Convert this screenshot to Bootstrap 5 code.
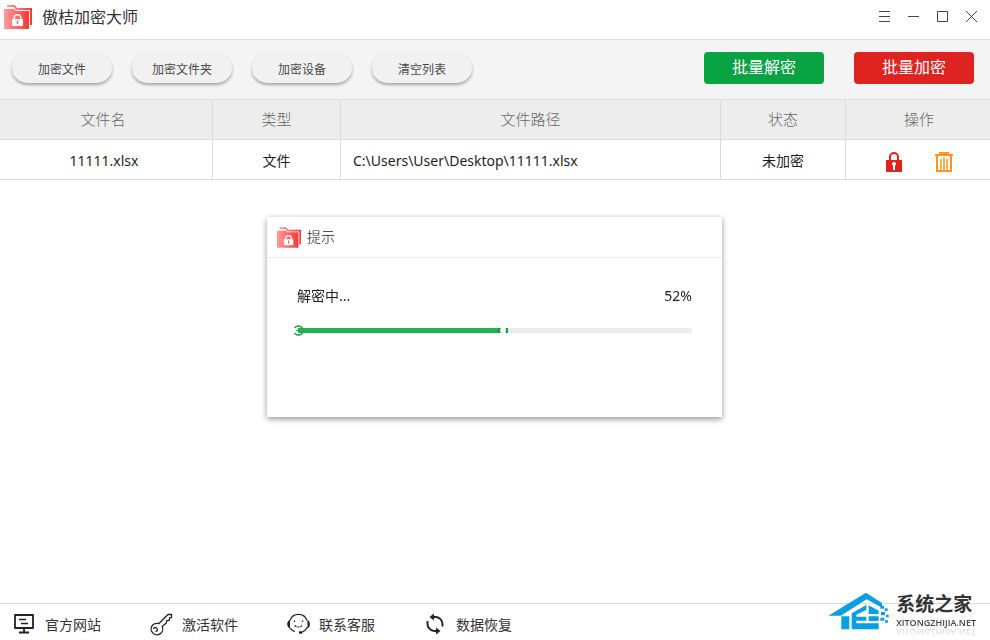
<!DOCTYPE html>
<html lang="zh-CN">
<head>
<meta charset="utf-8">
<meta name="viewport" content="width=device-width, initial-scale=1">
<title>傲桔加密大师</title>
<link href="https://cdn.jsdelivr.net/npm/bootstrap@5.3.0/dist/css/bootstrap.min.css" rel="stylesheet">
<style>
  body { font-family: "Noto Sans", "Noto Sans CJK SC", sans-serif; font-size: 14px; line-height: 20px; color: #1e1e1e; }
  svg { display: block; flex: none; }
  .title-bar { height: 40px; border-bottom: 1px solid #dcdcdc; padding: 0 12px 6px 4px; gap: 10px; }
  .title-bar h1 { font-size: 16px; line-height: 24px; color: #333; font-weight: 400; }
  .win-group { gap: 16px; }
  .win-btn { padding: 0; border: 0; background: none; color: #444; }
  .tool-bar { min-height: 60px; background: #f4f4f4; border-bottom: 1px solid #dcdcdc; padding: 0 16px 3px 12px; }
  .pill-group { gap: 20px; }
  .main-group { gap: 30px; }
  .btn-pill { width: 100px; height: 30px; padding: 3px 0 0; border: 0; border-radius: 15px; background: #f1f1f1; color: #4a4a4a; font-size: 12px; line-height: 20px; box-shadow: 0 2px 3px rgba(0,0,0,.32); }
  .btn-main { width: 120px; height: 32px; padding: 0 0 2px; border: 0; border-radius: 4px; color: #fff; font-size: 16px; line-height: 24px; }
  .btn-main:hover, .btn-main:active { color: #fff; }
  .btn-green, .btn-green:hover { background: #0aa344; }
  .btn-red, .btn-red:hover { background: #de2421; }
  .file-table { table-layout: fixed; width: 100%; border-collapse: separate; border-spacing: 0; }
  .file-table th, .file-table td { height: 40px; padding: 2px 0 0; text-align: center; border-bottom: 1px solid #dcdcdc; border-right: 1px solid #dcdcdc; white-space: nowrap; }
  .file-table th { background: #ededed; color: #666; font-size: 15px; font-weight: 300; padding: 0 0 2px; }
  .file-table th:last-child, .file-table td:last-child { border-right: 0; padding-left: 2px; }
  .file-table th:first-child { padding-right: 6px; }
  .file-table td:first-child { padding-right: 4px; }
  .file-table td.path-cell { text-align: left; padding-left: 12px; }
  .col-name { width: 213px; } .col-type { width: 128px; } .col-state { width: 125px; } .col-act { width: 144px; }
  .row-tools { gap: 32px; padding-top: 2px; }
  .overlay { position: fixed; inset: 0; padding: 0 1px 6px 0; pointer-events: none; }
  .tip-box { width: 455px; min-height: 200px; background: #fff; box-shadow: 0 2px 6px rgba(0,0,0,.42); pointer-events: auto; }
  .tip-head { height: 41px; padding: 0 10px; gap: 6px; border-bottom: 1px solid #ebebeb; }
  .tip-head h2 { font-size: 14px; line-height: 20px; font-weight: 300; color: #111; }
  .tip-body { padding: 28px 30px; }
  .track { position: relative; margin-top: 22px; }
  .track .progress { height: 5px; border-radius: 0; background: #ededed; }
  .track .progress-bar { background: #22b14c; }
  .knob { position: absolute; top: -3px; margin-left: -4px; }
  .foot-bar { position: relative; min-height: 37px; border-top: 1px solid #dcdcdc; padding: 6px 12px 0; }
  .foot-link { width: 137px; gap: 9px; color: #333; text-decoration: none; height: 28px; }
  .foot-link svg { color: #222; }
  .foot-link span { padding-top: 1px; }
  .site-mark { position: absolute; right: 14px; bottom: 10px; gap: 6px; color: #333; text-decoration: none; }
  .site-name { font-size: 19px; line-height: 25px; font-weight: 700; }
  .site-url { font-family: "Open Sans", sans-serif; font-size: 9px; line-height: 12px; font-weight: 600; color: #444; -webkit-box-reflect: below -3px linear-gradient(transparent, rgba(0,0,0,.3)); }
</style>
</head>
<body class="d-flex flex-column min-vh-100 bg-white">
<svg width="0" height="0" class="position-absolute" aria-hidden="true">
  <defs>
    <linearGradient id="redFade"><stop offset="0" stop-color="#ff9c9c"/><stop offset="1" stop-color="#fd3636"/></linearGradient>
    <symbol id="folder" viewBox="0 0 28 24">
      <path fill="url(#redFade)" d="M3 2V0h8l2 3h15v17h-2V5H12L10 2z"/>
      <path fill="url(#redFade)" d="M0 4h10l2 2h13v18H0z"/>
      <path fill="#fff" d="M8 14h1.500v-1a4 4 0 0 1 8 0v1H19v7H8zM11 14h5v-1a2.500 2.500 0 0 0-5 0z" fill-rule="evenodd"/>
      <path d="M13.500 15.500v3.500" stroke="#fd6060" stroke-width="1.400"/>
    </symbol>
  </defs>
</svg>

<header class="title-bar d-flex align-items-center">
  <svg width="28" height="24" aria-hidden="true"><use href="#folder"/></svg>
  <h1 class="mb-0 me-auto">傲桔加密大师</h1>
  <div class="win-group d-flex">
    <button class="win-btn" aria-label="菜单"><svg width="13" height="13" stroke="currentColor"><path d="M1 1.500h11M1 6.500h11M1 11.500h11"/></svg></button>
    <button class="win-btn" aria-label="最小化"><svg width="13" height="13" stroke="currentColor"><path d="M1 6.500h11"/></svg></button>
    <button class="win-btn" aria-label="最大化"><svg width="13" height="13" stroke="currentColor" fill="none"><path d="M1.500 1.500h10v10h-10z"/></svg></button>
    <button class="win-btn" aria-label="关闭"><svg width="13" height="13" stroke="currentColor"><path d="M1 1l11 11M12 1L1 12"/></svg></button>
  </div>
</header>

<div class="tool-bar d-flex align-items-center">
  <div class="pill-group d-flex me-auto">
    <button class="btn btn-pill">加密文件</button>
    <button class="btn btn-pill">加密文件夹</button>
    <button class="btn btn-pill">加密设备</button>
    <button class="btn btn-pill">清空列表</button>
  </div>
  <div class="main-group d-flex">
    <button class="btn btn-main btn-green">批量解密</button>
    <button class="btn btn-main btn-red">批量加密</button>
  </div>
</div>

<main class="flex-grow-1">
  <table class="file-table">
    <colgroup><col class="col-name"><col class="col-type"><col><col class="col-state"><col class="col-act"></colgroup>
    <thead><tr><th>文件名</th><th>类型</th><th>文件路径</th><th>状态</th><th>操作</th></tr></thead>
    <tbody>
      <tr>
        <td>11111.xlsx</td><td>文件</td><td class="path-cell">C:\Users\User\Desktop\11111.xlsx</td><td>未加密</td>
        <td>
          <div class="row-tools d-flex justify-content-center align-items-center">
            <button class="win-btn" aria-label="加密"><svg width="18" height="20" viewBox="0 0 18 20"><path fill="#de2421" fill-rule="evenodd" d="M1 8h3V5a5 5 0 0 1 10 0v3h3v12H1zM6 8h6V5a3 3 0 0 0-6 0zM7 12a2 2 0 0 0 1 1.700V18h2v-4.300A2 2 0 1 0 7 12z"/></svg></button>
            <button class="win-btn" aria-label="删除"><svg width="18" height="20" viewBox="0 0 18 20" fill="none" stroke="#ff9420"><path stroke-width="2" d="M0 3h18M2 3v16h14V3M5 3V1h8v2"/><path stroke-width="1.500" d="M6 7v11M9 5v13M12 7v11"/></svg></button>
          </div>
        </td>
      </tr>
    </tbody>
  </table>
</main>

<footer class="foot-bar d-flex align-items-start">
  <a href="#" class="foot-link d-flex align-items-center">
    <svg width="24" height="24" viewBox="0 0 24 24" fill="none" stroke="currentColor" stroke-width="1.800"><path d="M3 3h18v13H3zM12 16v4M7 20.500h10" stroke-linejoin="round"/><path d="M7 7.500h7M9 11.500h7" stroke-width="1.500"/></svg><span>官方网站</span></a>
  <a href="#" class="foot-link d-flex align-items-center">
    <svg width="24" height="24" viewBox="0 0 24 24" fill="none" stroke="currentColor" stroke-width="1.300" stroke-linejoin="round"><path d="M10 11.500 19 2.500h3.500v3.200l-2 .3-.3 2.300-2.500.4-.3 2.200-4.200 3.600a5.800 5.800 0 1 1-9.500-1.500q2-2.200 6.300-1.500z"/><path d="M4.500 17a2 2 0 1 1 2 2.500"/></svg><span>激活软件</span></a>
  <a href="#" class="foot-link d-flex align-items-center">
    <svg width="24" height="24" viewBox="0 0 24 24" fill="none" stroke="currentColor" stroke-width="1.300"><path d="M4 8.500a9 9 0 0 1 17 0M21.500 15q-2 4-6 5.500M4 16q1.500 2.500 5 3.500"/><path d="M4 8C.3 8.500.3 15.500 4 16.500zM21.500 8c3.200.5 3.200 7.500 0 8.500z" fill="currentColor" stroke="none"/><path d="M8.500 13.500q4 3 8 0" stroke-width="1.200" stroke-dasharray="2 1"/><path d="M8.500 8.500v1.500M16.500 8.500v1.500" stroke-width="1.300"/><path d="M13 20.500h3" stroke-width="2.400"/></svg><span>联系客服</span></a>
  <a href="#" class="foot-link d-flex align-items-center">
    <svg width="24" height="24" viewBox="0 0 24 24" fill="none" stroke="currentColor" stroke-width="1.900"><path d="M9 5h3.500A7 7 0 0 1 19.500 12v2.500M4.500 9v3A7 7 0 0 0 11.500 19H15"/><path d="M6.500 5 11 1.500v7zM17.500 19 13 15.500v7z" fill="currentColor" stroke="none"/></svg><span>数据恢复</span></a>
  <a href="#" class="site-mark d-flex align-items-start">
    <svg width="62" height="38" viewBox="24 20 186 114" fill="#0a9fe5">
      <path d="M25 91 138 22l48 31v14l-46-25-78 49z"/>
      <path d="M64 93h24v39H64zM95 84l44-25v15l-30 14v6h30v12h-30v8h67v18H95zM146 60l30 16v10h-30zM146 93h30v14h-30z"/>
      <path d="M181 61h11v9h-11zM194 69h9v8h-9zM183 80h12v10h-12zM198 88h8v8h-8zM181 97h12v9h-12zM195 105h9v7h-9z"/>
    </svg>
    <span class="d-flex flex-column"><span class="site-name">系统之家</span><span class="site-url">XITONGZHIJIA.NET</span></span>
  </a>
</footer>

<div class="overlay d-flex align-items-center justify-content-center">
  <section class="tip-box" role="dialog" aria-labelledby="tipTitle">
    <div class="tip-head d-flex align-items-center">
      <svg width="24" height="21" aria-hidden="true"><use href="#folder"/></svg>
      <h2 id="tipTitle" class="mb-0">提示</h2>
    </div>
    <div class="tip-body">
      <div class="d-flex justify-content-between"><span>解密中...</span><span>52%</span></div>
      <div class="track">
        <div class="progress" role="progressbar" aria-label="解密进度" aria-valuenow="52" aria-valuemin="0" aria-valuemax="100"><div class="progress-bar" style="width:52%"></div></div>
        <svg class="knob" style="left:0" width="11" height="11"><circle cx="5.500" cy="5.500" r="4.500" fill="#fff" stroke="#0aa344" stroke-width="1.600"/><path fill="#22b14c" d="M5 3h6v5H5z"/><path fill="#fff" d="M0 3h4v5H0z"/><path fill="#22b14c" d="M3 5h3v1H3z"/></svg>
        <svg class="knob" style="left:52%" width="11" height="11"><path fill="#0aa344" d="M0 3h10v5H0z"/><path fill="#fff" d="M3 3h4.500q1 2.500 0 5H3q-2-2.500 0-5z"/></svg>
      </div>
    </div>
  </section>
</div>
<script src="https://cdn.jsdelivr.net/npm/bootstrap@5.3.0/dist/js/bootstrap.bundle.min.js"></script>
</body>
</html>
